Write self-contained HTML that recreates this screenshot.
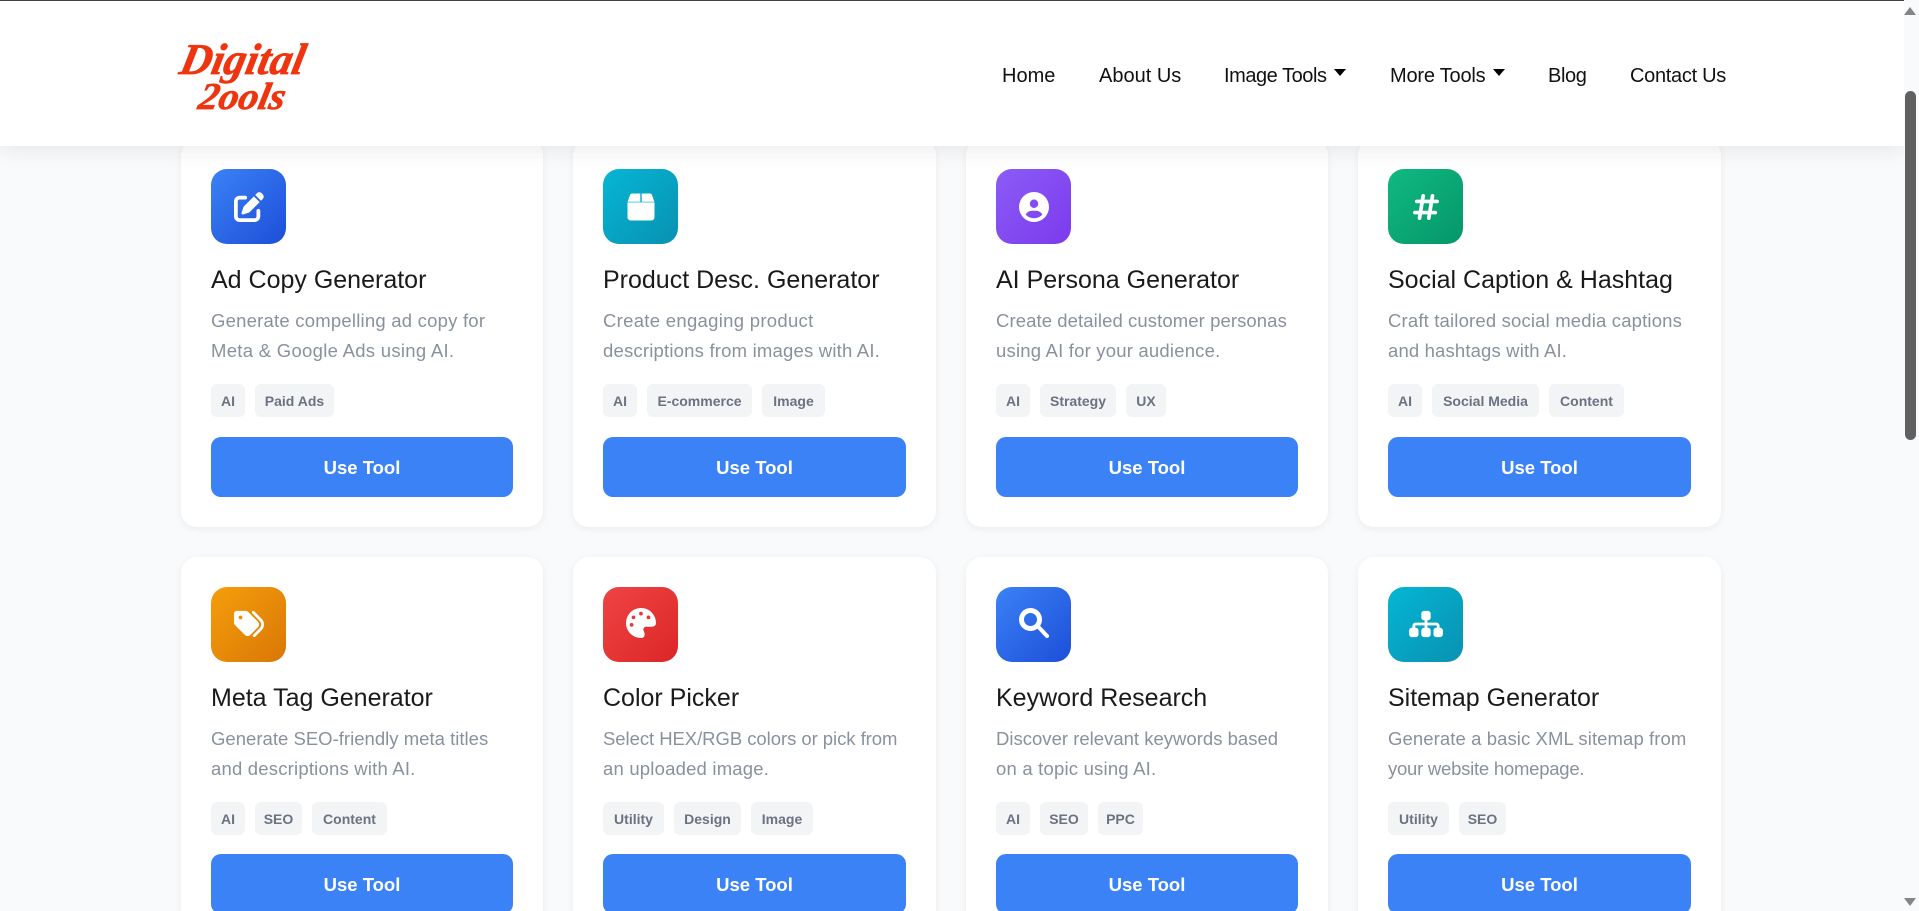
<!DOCTYPE html>
<html lang="en"><head><meta charset="utf-8"><title>Digital Tools</title>
<style>
*{box-sizing:border-box;margin:0;padding:0}
html,body{width:1919px;height:911px;overflow:hidden;background:#f9fafb;font-family:"Liberation Sans",Arial,sans-serif}
#page{position:relative;width:1919px;height:911px;overflow:hidden;background:#f9fafb}
header{position:absolute;left:0;top:0;width:1904px;height:146px;background:#fff;border-top:1px solid #444;box-shadow:0 4px 20px rgba(0,0,0,.08);z-index:5}
.logo{position:absolute;left:170px;top:29px}
.nav{position:absolute;top:60px;height:30px;line-height:30px;font-size:20px;color:#111;white-space:nowrap}
.caret{position:absolute;top:68px;width:0;height:0;border-left:6.5px solid transparent;border-right:6.5px solid transparent;border-top:7px solid #000}
.card{position:absolute;width:362px;height:388px;background:#fff;border-radius:16px;box-shadow:0 2px 8px rgba(0,0,0,.06)}
.ic{position:absolute;left:30px;top:30px;width:75px;height:75px;border-radius:16px;display:flex;align-items:center;justify-content:center}
.ic svg{fill:#fff;display:block}
.blue{background:linear-gradient(135deg,#3b82f6,#1d4ed8)}
.cyan{background:linear-gradient(135deg,#06b6d4,#0891b2)}
.purple{background:linear-gradient(135deg,#8b5cf6,#7c3aed)}
.green{background:linear-gradient(135deg,#10b981,#059669)}
.amber{background:linear-gradient(135deg,#f59e0b,#d97706)}
.red{background:linear-gradient(135deg,#ef4444,#dc2626)}
h3{position:absolute;left:30px;top:126px;height:30px;line-height:30px;font-size:25px;font-weight:400;color:#1a1a1a;white-space:nowrap}
p{position:absolute;left:30px;top:166.5px;line-height:30px;font-size:18.5px;letter-spacing:.2px;color:#8a919e;white-space:nowrap}
.tags{position:absolute;left:30px;top:245px;display:flex;gap:10px}
.tags span{height:33px;line-height:34px;text-align:center;background:#f3f4f6;border-radius:6px;font-size:14px;font-weight:700;color:#6b7280;white-space:nowrap}
.btn{position:absolute;left:30px;top:298px;width:302px;height:60px;line-height:62px;border-radius:10px;background:#3b82f6;color:#fff;font-size:18.5px;font-weight:700;text-align:center}
.r2 .btn{top:297px;line-height:62px}
#sb{position:absolute;left:1904px;top:1px;width:15px;height:910px;background:#f9fafb;z-index:6}
#thumb{position:absolute;left:1px;top:90px;width:11px;height:349px;background:#606060;border-radius:6px}
.arr{position:absolute;left:0;width:0;height:0;border-left:6.5px solid transparent;border-right:6.5px solid transparent}
</style></head><body><div id="page">
<header>
<svg class="logo" width="150" height="90" viewBox="0 0 150 90"><g fill="#ee3510" stroke="#ee3510" stroke-width=".7" stroke-linejoin="round" font-family="'Liberation Serif',serif" font-style="italic" font-weight="700"><text font-size="44" textLength="124" lengthAdjust="spacingAndGlyphs" transform="translate(8 44) skewX(-12)">Digital</text><text font-size="38" textLength="86" lengthAdjust="spacingAndGlyphs" transform="translate(27 79) skewX(-12)">2ools</text></g></svg>
<span class="nav" style="left:1002px">Home</span>
<span class="nav" style="left:1099px">About Us</span>
<span class="nav" style="left:1224px;letter-spacing:-.45px">Image Tools</span><i class="caret" style="left:1334px"></i>
<span class="nav" style="left:1390px;letter-spacing:-.2px">More Tools</span><i class="caret" style="left:1493px"></i>
<span class="nav" style="left:1548px;letter-spacing:-.4px">Blog</span>
<span class="nav" style="left:1630px;letter-spacing:-.3px">Contact Us</span>
</header>

<div class="card" style="left:181px;top:139px"><div class="ic blue"><svg width="30" height="30" viewBox="0 0 512 512"><path d="M471.6 21.7c-21.9-21.9-57.3-21.9-79.2 0L362.3 51.7l97.9 97.9 30.1-30.1c21.9-21.9 21.9-57.3 0-79.2L471.6 21.7zm-299.2 220c-6.1 6.1-10.8 13.6-13.5 21.9l-29.6 88.8c-2.9 8.6-.6 18.1 5.8 24.6s15.9 8.7 24.6 5.8l88.8-29.6c8.2-2.7 15.7-7.4 21.9-13.5L437.7 172.3 339.7 74.3 172.4 241.7zM96 64C43 64 0 107 0 160V416c0 53 43 96 96 96H352c53 0 96-43 96-96V320c0-17.7-14.3-32-32-32s-32 14.3-32 32v96c0 17.7-14.3 32-32 32H96c-17.7 0-32-14.3-32-32V160c0-17.7 14.3-32 32-32h96c17.7 0 32-14.3 32-32s-14.3-32-32-32H96z"/></svg></div><h3>Ad Copy Generator</h3><p><span style="letter-spacing:.22px">Generate compelling ad copy for</span><br><span style="letter-spacing:.29px">Meta &amp; Google Ads using AI.</span></p><div class="tags"><span style="width:34px">AI</span><span style="width:79px">Paid Ads</span></div><div class="btn">Use Tool</div></div>

<div class="card" style="left:573px;top:139px;width:363px"><div class="ic cyan"><svg width="28" height="28" viewBox="0 0 28 28"><path d="M5.2 .5H13.3V8.8H.6L3 2Q3.6 .5 5.2 .5z"/><path d="M14.7 .5H22.8Q24.4 .5 25 2L27.4 8.8H14.7z"/><path d="M.5 9.4H27.5V24Q27.5 27.5 24 27.5H4Q.5 27.5 .5 24z"/></svg></div><h3>Product Desc. Generator</h3><p><span style="letter-spacing:.3px">Create engaging product</span><br>descriptions from images with AI.</p><div class="tags"><span style="width:34px">AI</span><span style="width:105px">E-commerce</span><span style="width:63px">Image</span></div><div class="btn" style="width:303px">Use Tool</div></div>

<div class="card" style="left:966px;top:139px"><div class="ic purple"><svg width="30" height="30" viewBox="0 0 512 512" fill-rule="evenodd"><path d="M399 384.2C376.9 345.8 335.4 320 288 320H224c-47.4 0-88.9 25.8-111 64.2c35.2 39.2 86.2 63.8 143 63.8s107.8-24.7 143-63.8zM0 256a256 256 0 1 1 512 0A256 256 0 1 1 0 256zm256 16a72 72 0 1 0 0-144 72 72 0 1 0 0 144z"/></svg></div><h3>AI Persona Generator</h3><p><span style="letter-spacing:.09px">Create detailed customer personas</span><br>using AI for your audience.</p><div class="tags"><span style="width:34px">AI</span><span style="width:76px">Strategy</span><span style="width:40px">UX</span></div><div class="btn">Use Tool</div></div>

<div class="card" style="left:1358px;top:139px;width:363px"><div class="ic green"><svg width="26" height="30" viewBox="0 0 448 512" fill-rule="evenodd"><path d="M181.3 32.4c17.4 2.9 29.2 19.4 26.3 36.8L197.8 128h95.1l11.5-69.3c2.9-17.4 19.4-29.2 36.8-26.3s29.2 19.4 26.3 36.8L357.8 128H416c17.7 0 32 14.3 32 32s-14.3 32-32 32H347.1L325.8 320H384c17.7 0 32 14.3 32 32s-14.3 32-32 32H315.1l-11.5 69.3c-2.9 17.4-19.4 29.2-36.8 26.3s-29.2-19.4-26.3-36.8l9.8-58.7H155.1l-11.5 69.3c-2.9 17.4-19.4 29.2-36.8 26.3s-29.2-19.4-26.3-36.8L90.2 384H32c-17.7 0-32-14.3-32-32s14.3-32 32-32h68.9l21.3-128H64c-17.7 0-32-14.3-32-32s14.3-32 32-32h68.9l11.5-69.3c2.9-17.4 19.4-29.2 36.8-26.3zM187.1 192L165.8 320h95.1l21.3-128H187.1z"/></svg></div><h3>Social Caption &amp; Hashtag</h3><p><span style="letter-spacing:.17px">Craft tailored social media captions</span><br><span style="letter-spacing:.15px">and hashtags with AI.</span></p><div class="tags"><span style="width:34px">AI</span><span style="width:107px">Social Media</span><span style="width:75px">Content</span></div><div class="btn" style="width:303px">Use Tool</div></div>

<div class="card r2" style="left:181px;top:557px"><div class="ic amber"><svg width="30" height="30" viewBox="0 0 512 512" style="margin-top:-2px"><path d="M345 39.1L472.8 168.4c52.4 53 52.4 138.2 0 191.2L360.8 472.9c-9.3 9.4-24.5 9.5-33.9 .2s-9.5-24.5-.2-33.9L438.6 325.9c33.9-34.3 33.9-89.4 0-123.7L310.9 72.9c-9.3-9.4-9.2-24.6 .2-33.9s24.6-9.2 33.9 .2zM0 229.5V80C0 53.5 21.5 32 48 32H197.5c17 0 33.3 6.7 45.3 18.7l168 168c25 25 25 65.5 0 90.5L277.3 442.7c-25 25-65.5 25-90.5 0l-168-168C6.7 262.7 0 246.5 0 229.5zM144 144a32 32 0 1 0 -64 0 32 32 0 1 0 64 0z" fill-rule="evenodd"/></svg></div><h3>Meta Tag Generator</h3><p><span style="letter-spacing:.02px">Generate SEO-friendly meta titles</span><br>and descriptions with AI.</p><div class="tags"><span style="width:34px">AI</span><span style="width:47px">SEO</span><span style="width:75px">Content</span></div><div class="btn">Use Tool</div></div>

<div class="card r2" style="left:573px;top:557px;width:363px"><div class="ic red"><svg width="30" height="30" viewBox="0 0 512 512" fill-rule="evenodd" style="margin-top:-3px"><path d="M512 256c0 .9 0 1.8 0 2.7c-.4 36.5-33.6 61.3-70.1 61.3H344c-26.5 0-48 21.5-48 48c0 3.4 .4 6.7 1 9.9c2.1 10.2 6.5 20 10.8 29.9c6.1 13.8 12.1 27.5 12.1 42c0 31.8-21.6 60.7-53.4 62c-3.5 .1-7 .2-10.6 .2C114.6 512 0 397.4 0 256S114.6 0 256 0S512 114.6 512 256zM128 288a32 32 0 1 0 -64 0 32 32 0 1 0 64 0zm0-96a32 32 0 1 0 0-64 32 32 0 1 0 0 64zM288 96a32 32 0 1 0 -64 0 32 32 0 1 0 64 0zm96 96a32 32 0 1 0 0-64 32 32 0 1 0 0 64z"/></svg></div><h3>Color Picker</h3><p><span style="letter-spacing:-.05px">Select HEX/RGB colors or pick from</span><br>an uploaded image.</p><div class="tags"><span style="width:61px">Utility</span><span style="width:67px">Design</span><span style="width:62px">Image</span></div><div class="btn" style="width:303px">Use Tool</div></div>

<div class="card r2" style="left:966px;top:557px"><div class="ic blue"><svg width="30" height="30" viewBox="0 0 30 30" style="margin-top:-3px"><circle cx="11.5" cy="11.5" r="9" fill="none" stroke="#fff" stroke-width="5"/><path d="M20 19.5L28 28" fill="none" stroke="#fff" stroke-width="4" stroke-linecap="round"/></svg></div><h3>Keyword Research</h3><p><span style="letter-spacing:.01px">Discover relevant keywords based</span><br>on a topic using AI.</p><div class="tags"><span style="width:34px">AI</span><span style="width:48px">SEO</span><span style="width:45px">PPC</span></div><div class="btn">Use Tool</div></div>

<div class="card r2" style="left:1358px;top:557px;width:363px"><div class="ic cyan"><svg width="34" height="30" viewBox="0 0 576 512" style="margin-top:-1px"><path d="M208 80c0-26.5 21.5-48 48-48h64c26.5 0 48 21.5 48 48v64c0 26.5-21.5 48-48 48h-8v40H464c30.9 0 56 25.1 56 56v32h8c26.5 0 48 21.5 48 48v64c0 26.5-21.5 48-48 48H464c-26.5 0-48-21.5-48-48V368c0-26.5 21.5-48 48-48h8V288c0-4.4-3.6-8-8-8H312v40h8c26.5 0 48 21.5 48 48v64c0 26.5-21.5 48-48 48H256c-26.5 0-48-21.5-48-48V368c0-26.5 21.5-48 48-48h8V280H112c-4.4 0-8 3.6-8 8v32h8c26.5 0 48 21.5 48 48v64c0 26.5-21.5 48-48 48H48c-26.5 0-48-21.5-48-48V368c0-26.5 21.5-48 48-48h8V288c0-30.9 25.1-56 56-56H264V192h-8c-26.5 0-48-21.5-48-48V80z"/></svg></div><h3>Sitemap Generator</h3><p><span style="letter-spacing:.09px">Generate a basic XML sitemap from</span><br><span style="letter-spacing:-.24px">your website homepage.</span></p><div class="tags"><span style="width:61px">Utility</span><span style="width:47px">SEO</span></div><div class="btn" style="width:303px">Use Tool</div></div>

<div id="sb"><i class="arr" style="top:6px;border-bottom:8px solid #858585"></i><div id="thumb"></div><i class="arr" style="top:897px;border-top:8px solid #858585"></i></div>
</div></body></html>
